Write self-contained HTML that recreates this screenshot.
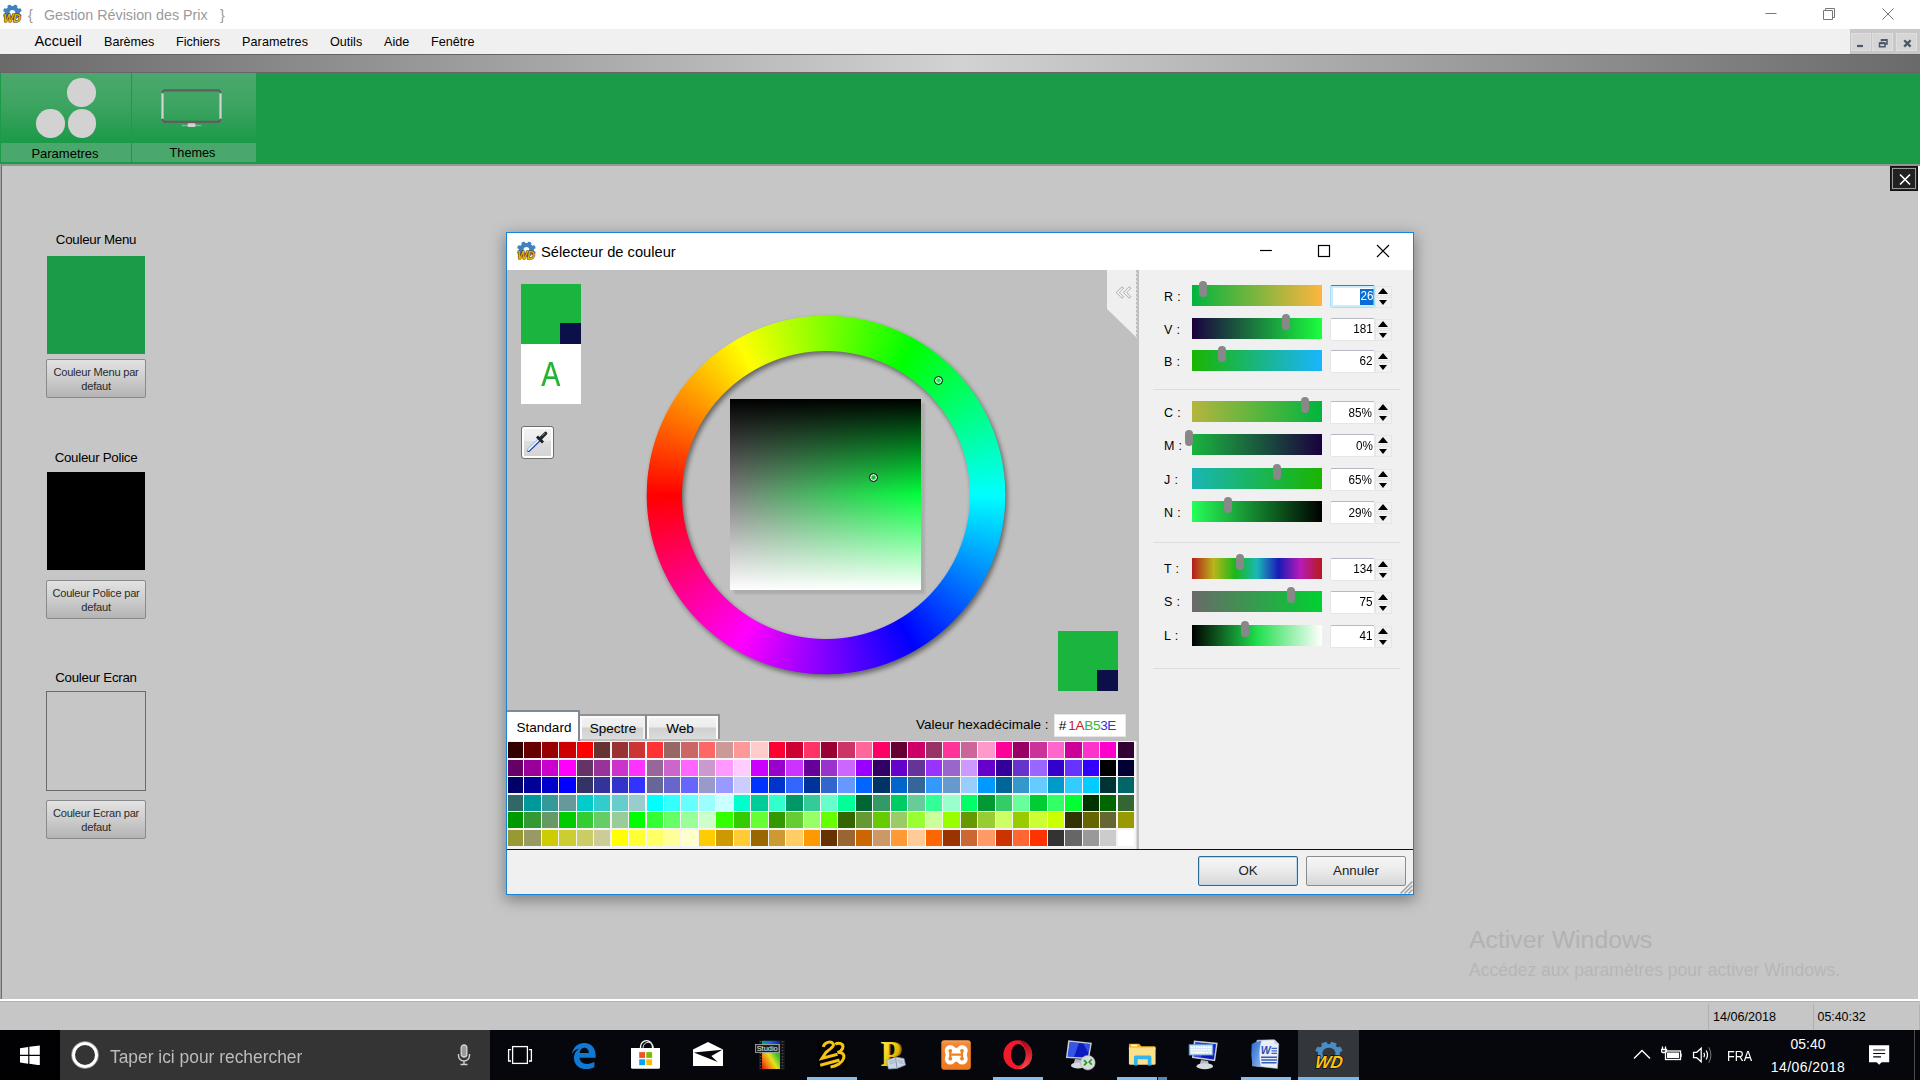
<!DOCTYPE html>
<html lang="fr">
<head>
<meta charset="utf-8">
<title>Gestion Révision des Prix</title>
<style>
*{box-sizing:border-box;margin:0;padding:0}
html,body{width:1920px;height:1080px;overflow:hidden;background:#c6c6c6;font-family:"Liberation Sans",sans-serif;color:#000}
.abs,#root *{position:absolute}
#root{position:relative;width:1920px;height:1080px;overflow:hidden}
#root span.t{white-space:nowrap;line-height:1}
/* title bar */
#titlebar{left:0;top:0;width:1920px;height:29px;background:#fff}
#menubar{left:0;top:29px;width:1920px;height:25px;background:#f0f0f0}
#graybar{left:0;top:54px;width:1920px;height:19px;border-top:1px solid #646464;border-bottom:1px solid #6a646a;background:linear-gradient(to right,#6a6a6a 0%,#d2d2d2 50%,#6a6a6a 100%)}
#ribbon{left:0;top:73px;width:1920px;height:91px;background:#1b9a48}
.rbtn{top:0;height:89px;background:linear-gradient(to bottom,#4aa86c 0%,#3ea462 35%,#1b9a48 78%,#1b9a48 100%)}
.rlbl{left:0;bottom:0;height:19px;width:100%;background:#4aa86c}
#mdi{left:0;top:164px;width:1920px;height:837px;background:#c6c6c6}
#status{left:0;top:1001px;width:1920px;height:29px;background:#c6c6c6;border-top:1px solid #b2b2b2}
#taskbar{left:0;top:1030px;width:1920px;height:50px;background:#05070d}
.m{font-size:12.600px;top:7px}
.lbl{font-size:13.300px;letter-spacing:-.270px;width:200px;text-align:center}
.dbtn{width:100px;height:39px;border:1px solid #8a8a8a;border-radius:2px;background:linear-gradient(to bottom,#e2e2e2 0%,#cfcfcf 45%,#b4b4b4 100%);font-size:11.100px;letter-spacing:-.230px;text-align:center;line-height:14px;padding:5px 4px 0 4px;color:#2a2a2a}

/* dialog */
#dlg{left:0;top:0;width:0;height:0}
#dlg i{display:block}
.sl{left:1192px;width:130px;height:21px}
.hd{width:8px;height:16px;border-radius:4px;background:#888}
.lb{left:1164px;font-size:12.500px;white-space:pre;line-height:1;word-spacing:.7px}
.inp{left:1330px;width:44.500px;height:22.500px;background:#fff;border:1px solid #e6e6ea;border-top-color:#b8b8c4;border-radius:2px}
.inp span{right:1px;top:2.500px;font-size:13px;line-height:1;white-space:nowrap;transform:scaleX(.9);transform-origin:100% 50%}
.sp{left:1375.400px;width:17px;height:22px}
.sp:before,.sp:after{content:"";position:absolute;box-sizing:border-box;left:0;width:17px;height:10.300px;border:1px solid #e6e6e6;background:#f1f1f1}
.sp:before{top:.6px}.sp:after{top:12.400px}
.sp b{width:0;height:0;z-index:2}
.sp b.u{left:2.300px;top:2.800px;border-left:5.800px solid transparent;border-right:5.800px solid transparent;border-bottom:6px solid #000}
.sp b.d{left:3.300px;top:14.800px;border-left:4.800px solid transparent;border-right:4.800px solid transparent;border-top:5.300px solid #000}
.sep{left:1153px;width:247px;height:1px;background:#dcdcdc}
.tab{font-size:13.500px;text-align:center;line-height:1}
.btn{width:100px;height:30px;border:1px solid #8c8c8c;border-radius:2px;background:linear-gradient(to bottom,#f6f6f6 0%,#ececec 45%,#d6d6d6 100%);font-size:13.300px;text-align:center;line-height:28px;color:#222}
</style>
</head>
<body>
<div id="root">

<!-- ===== main window chrome ===== -->
<div id="titlebar">
  <svg style="left:0;top:0" width="24" height="24" viewBox="0 0 24 24"><g fill="#3f82c0" transform="translate(12.400 13) scale(1.100 1) translate(-12.400 -13)"><rect x="10.600" y="4.300" width="3.600" height="5" rx="1.300" transform="rotate(-67.5 12.400 13)"/><rect x="10.600" y="4.300" width="3.600" height="5" rx="1.300" transform="rotate(-22.5 12.400 13)"/><rect x="10.600" y="4.300" width="3.600" height="5" rx="1.300" transform="rotate(22.5 12.400 13)"/><rect x="10.600" y="4.300" width="3.600" height="5" rx="1.300" transform="rotate(67.5 12.400 13)"/><rect x="10.600" y="4.300" width="3.600" height="5" rx="1.300" transform="rotate(-112.5 12.400 13)"/><rect x="10.600" y="4.300" width="3.600" height="5" rx="1.300" transform="rotate(112.5 12.400 13)"/><circle cx="12.400" cy="13" r="6.900"/></g><circle cx="12.400" cy="13" r="2.900" fill="#fff"/><text x="12.200" y="22" font-family="Liberation Sans,sans-serif" font-weight="bold" font-style="italic" font-size="11.500" text-anchor="middle" fill="#ecb400" stroke="#4a3200" stroke-width="1.100" paint-order="stroke" textLength="17.500" lengthAdjust="spacingAndGlyphs">WD</text></svg>
  <span class="t" style="left:28px;top:8px;font-size:14.300px;color:#9a9a9a">{</span><span class="t" style="left:44px;top:8px;font-size:14.300px;color:#9a9a9a">Gestion Révision des Prix</span><span class="t" style="left:220px;top:8px;font-size:14.300px;color:#9a9a9a">}</span>
  <!-- window buttons -->
  <svg style="left:1760px;top:0" width="160" height="29" viewBox="0 0 160 29" fill="none" stroke="#777" stroke-width="1">
    <path d="M5.500 13.500H16.500"/>
    <path d="M63.500 10.500h9v9h-9z M65.500 10.500v-2h9v9h-2"/>
    <path d="M122.500 8.500l11 11M133.500 8.500l-11 11"/>
  </svg>
</div>

<div id="menubar">
  <span class="t" style="left:34.500px;top:5px;font-size:14.700px">Accueil</span>
  <span class="t m" style="left:104px">Barèmes</span>
  <span class="t m" style="left:176px">Fichiers</span>
  <span class="t m" style="left:242px;letter-spacing:.1px">Parametres</span>
  <span class="t m" style="left:330px">Outils</span>
  <span class="t m" style="left:384px">Aide</span>
  <span class="t m" style="left:431px">Fenêtre</span>
  <div style="left:1850px;top:0;width:70px;height:25px;background:#c8c8c8">
    <div style="left:.5px;top:4.300px;width:20px;height:18.200px;background:#d6d6d6;border:1px solid #dedede"></div>
    <div style="left:22.300px;top:4.300px;width:20.300px;height:18.200px;background:#d6d6d6;border:1px solid #dedede"></div>
    <div style="left:46px;top:4.300px;width:20.700px;height:18.200px;background:#d6d6d6;border:1px solid #dedede"></div>
    <svg style="left:0;top:0" width="70" height="25" viewBox="0 0 70 25" fill="none" stroke="#4a566a">
      <path d="M7 17h6" stroke-width="2.200"/>
      <path d="M29.500 14h5.500v3.700h-5.500z M31.500 12.500v-1.800h5.500v4.300h-1.800" stroke-width="1.500"/><path d="M29.500 14.200h5.500M31.500 11h5.500" stroke-width="2"/>
      <path d="M54.200 11.200l6.400 6.400M60.600 11.200l-6.400 6.400" stroke-width="2.300"/>
    </svg>
  </div>
</div>

<div id="graybar"></div>

<div id="ribbon">
  <div class="rbtn" style="left:1px;width:130px">
    <div style="left:66.200px;top:5px;width:28.700px;height:28.700px;border-radius:50%;background:#d2d2d2"></div>
    <div style="left:35.200px;top:36.200px;width:28.700px;height:28.700px;border-radius:50%;background:#d2d2d2"></div>
    <div style="left:66.500px;top:36.200px;width:28.700px;height:28.700px;border-radius:50%;background:#d2d2d2"></div>
    <div class="rlbl"><span class="t" style="left:-1px;width:100%;text-align:center;top:4px;font-size:13px">Parametres</span></div>
  </div>
  <div class="rbtn" style="left:132px;width:124px">
    <svg style="left:25.500px;top:13px" width="68" height="46" viewBox="0 0 68 46" fill="none">
      <path d="M4.500 6.500V33.500M62.500 6.500V33.500" stroke="#d2d2d2" stroke-width="2.200"/>
      <path d="M3.800 7L6.300 4.300H60.700L63.200 7" stroke="#5e5e5e" stroke-width="2.200" stroke-linejoin="round"/>
      <path d="M3.800 33L6.300 35.800H60.700L63.200 33" stroke="#5e5e5e" stroke-width="2.200" stroke-linejoin="round"/>
      <path d="M23.800 39.500H43.300" stroke="#9aa89e" stroke-width="1.400"/>
      <rect x="29.700" y="37.300" width="7.700" height="3.700" rx="1" fill="#d2d2d2"/>
    </svg>
    <div class="rlbl"><span class="t" style="left:-1.500px;width:100%;text-align:center;top:4px;font-size:12.700px">Themes</span></div>
  </div>
</div>

<div id="mdi">
  <div style="left:0;top:0;width:1920px;height:2px;background:#8f9a92"></div>
  <div style="left:0;top:1px;width:1px;height:834px;background:#a4a4a4"></div><div style="left:1px;top:1px;width:1px;height:834px;background:#6c6c6c"></div>
  <!-- close X -->
  <div style="left:1890px;top:2px;width:28px;height:25px;background:#222;border:1px solid #111;outline:1px solid #9a9a9a;outline-offset:-3px">
    <svg style="left:6.500px;top:5.500px" width="14" height="13" viewBox="0 0 14 13" stroke="#fff" stroke-width="1.700" fill="none"><path d="M2 1.500l10 10M12 1.500l-10 10"/></svg>
  </div>

  <span class="t lbl" style="left:-4px;top:69px">Couleur Menu</span>
  <div style="left:47px;top:92px;width:98px;height:98px;background:#1b9a48"></div>
  <div class="dbtn" style="left:46px;top:195px">Couleur Menu par defaut</div>

  <span class="t lbl" style="left:-4px;top:287px">Couleur Police</span>
  <div style="left:47px;top:308px;width:98px;height:98px;background:#000"></div>
  <div class="dbtn" style="left:46px;top:416px">Couleur Police par defaut</div>

  <span class="t lbl" style="left:-4px;top:507px">Couleur Ecran</span>
  <div style="left:46px;top:527px;width:100px;height:100px;background:#c6c6c6;border:1px solid #6a6a6a"></div>
  <div class="dbtn" style="left:46px;top:636px">Couleur Ecran par defaut</div>

  <span class="t" style="left:1469px;top:764.300px;font-size:24.800px;color:#b2b2b2">Activer Windows</span>
  <span class="t" style="left:1469px;top:798px;font-size:17.550px;color:#b6b6b6">Accédez aux paramètres pour activer Windows.</span>
  <div style="left:1918px;top:2px;width:2px;height:835px;background:#fff"></div>
  <div style="left:0;top:835px;width:1920px;height:2px;background:#fff"></div>
</div>

<div id="status">
  <div style="left:1708px;top:2px;width:1px;height:26px;background:#b0b0b0"></div><div style="left:1919px;top:2px;width:1px;height:26px;background:#b4b4b4"></div>
  <div style="left:1813px;top:2px;width:1px;height:26px;background:#b0b0b0"></div>
  <span class="t" style="left:1713px;top:8.500px;font-size:12.600px">14/06/2018</span>
  <span class="t" style="left:1817.500px;top:8.500px;font-size:12.400px">05:40:32</span>
</div>

<!-- DIALOG -->

<div id="dlg">
 <div style="left:498px;top:226px;width:924px;height:680px;background:rgba(0,0,0,0);box-shadow:0 0 0 0 transparent"></div>
 <div style="left:506px;top:232px;width:908px;height:663px;background:#f0f0f0;border:1px solid #1883d7;box-shadow:0 4px 14px 1px rgba(0,0,0,.36)"></div>
 <div style="left:507px;top:233px;width:906px;height:37px;background:#fff"></div>
 <svg style="left:514px;top:237px" width="24" height="24" viewBox="0 0 24 24"><g fill="#3f82c0" transform="translate(12.400 13) scale(1.100 1) translate(-12.400 -13)"><rect x="10.600" y="4.300" width="3.600" height="5" rx="1.300" transform="rotate(-67.5 12.400 13)"/><rect x="10.600" y="4.300" width="3.600" height="5" rx="1.300" transform="rotate(-22.5 12.400 13)"/><rect x="10.600" y="4.300" width="3.600" height="5" rx="1.300" transform="rotate(22.5 12.400 13)"/><rect x="10.600" y="4.300" width="3.600" height="5" rx="1.300" transform="rotate(67.5 12.400 13)"/><rect x="10.600" y="4.300" width="3.600" height="5" rx="1.300" transform="rotate(-112.5 12.400 13)"/><rect x="10.600" y="4.300" width="3.600" height="5" rx="1.300" transform="rotate(112.5 12.400 13)"/><circle cx="12.400" cy="13" r="6.900"/></g><circle cx="12.400" cy="13" r="2.900" fill="#fff"/><text x="12.200" y="22" font-family="Liberation Sans,sans-serif" font-weight="bold" font-style="italic" font-size="11.500" text-anchor="middle" fill="#ecb400" stroke="#4a3200" stroke-width="1.100" paint-order="stroke" textLength="17.500" lengthAdjust="spacingAndGlyphs">WD</text></svg>
 <span class="t" style="left:541px;top:244.700px;font-size:14.700px">Sélecteur de couleur</span>
 <svg style="left:1250px;top:240px" width="150" height="24" viewBox="0 0 150 24" fill="none" stroke="#000" stroke-width="1.2">
   <path d="M10 10.5H22"/>
   <rect x="68.5" y="5.500" width="11" height="11"/>
   <path d="M127 5l12 12M139 5l-12 12"/>
 </svg>

 <!-- left gray panel -->
 <div style="left:507px;top:270px;width:632px;height:579px;background:#c0c0c0"></div>
 <!-- collapse tab -->
 <svg style="left:1106px;top:270px" width="32" height="70" viewBox="0 0 32 70">
   <path d="M1 0H31V68L1 39Z" fill="#efefef"/>
   <path d="M30.500 0V67" stroke="#bcbcbc" stroke-dasharray="2.500 1.500" fill="none"/>
   <path d="M16 18.300l-4.200 4.200 4.200 4.200M23.300 18.300l-4.200 4.200 4.200 4.200" stroke="#b2b2b2" stroke-width="3" fill="none" stroke-linecap="square"/>
   <path d="M16 18.300l-4.200 4.200 4.200 4.200M23.300 18.300l-4.200 4.200 4.200 4.200" stroke="#fbfbfb" stroke-width="1.300" fill="none" stroke-linecap="square"/>
 </svg>

 <!-- swatch + A -->
 <div style="left:521px;top:284px;width:60px;height:60px;background:#1ab53e"></div>
 <div style="left:560px;top:323px;width:21px;height:21px;background:#0b1048"></div>
 <div style="left:521px;top:344px;width:60px;height:60px;background:#fff"></div>
 <span class="t" style="left:521px;width:60px;text-align:center;top:357px;font-size:35.500px;transform:scaleX(.8);color:#1ab53e;text-shadow:-0.700px 0 0 #d8c83a">A</span>
 <!-- eyedropper -->
 <div style="left:521.250px;top:426.250px;width:32.500px;height:32.500px;border:1px solid #707070;border-radius:3px;box-shadow:inset 0 0 0 2px #fdfdfd;background:linear-gradient(to bottom,#f2f2f2 0%,#ebebeb 46%,#dddddd 46%,#d3d3d3 100%)"></div>
 <svg style="left:525px;top:430px" width="25" height="25" viewBox="0 0 25 25" fill="none">
   <path d="M14 10.300L3.600 20.300" stroke="#2636b4" stroke-width="3.400" stroke-linecap="round"/>
   <path d="M13.400 10L3.200 19.900" stroke="#bfe4f6" stroke-width="2.200" stroke-linecap="round"/>
   <path d="M13.300 10.300L3.800 19.600" stroke="#ffffff" stroke-width="1" stroke-linecap="round"/>
   <path d="M12 6.400L18 12.400" stroke="#1c1c1c" stroke-width="2.800"/>
   <path d="M14.200 9.800L15.800 8.200" stroke="#1c2a3a" stroke-width="4.200"/>
   <path d="M16 8L20.600 3.400" stroke="#262626" stroke-width="3.400" stroke-linecap="round"/>
   <path d="M17 6L20 3" stroke="#8a8a8a" stroke-width=".8"/>
 </svg>

 <!-- wheel -->
 <div style="left:646px;top:315px;width:360px;height:360px;filter:drop-shadow(2.500px 3px 2.500px rgba(0,0,0,.48))">
   <div style="left:0;top:0;width:360px;height:360px;border-radius:50%;background:conic-gradient(from 270deg,#f00,#ff0,#0f0,#0ff,#00f,#f0f,#f00);-webkit-mask:radial-gradient(circle closest-side,transparent 143.500px,#000 144.500px,#000 178.800px,transparent 179.800px);mask:radial-gradient(circle closest-side,transparent 143.500px,#000 144.500px,#000 178.800px,transparent 179.800px)"></div>
 </div>
 <div style="left:730px;top:399px;width:191px;height:191px;box-shadow:4px 4px 2px rgba(0,0,0,.1);background:linear-gradient(to bottom,#000 0%,rgba(0,0,0,0) 50%,rgba(255,255,255,0) 50%,#fff 100%),linear-gradient(to right,#808080,#00ff3b)"></div>
 <div style="left:934px;top:376px;width:9px;height:9px;border-radius:50%;border:1px solid #111;box-shadow:inset 0 0 0 1.200px #f4fff4"></div>
 <div style="left:869px;top:473px;width:9px;height:9px;border-radius:50%;border:1px solid #111;box-shadow:inset 0 0 0 1.200px #f4fff4"></div>

 <!-- bottom right swatch -->
 <div style="left:1058px;top:631px;width:60px;height:60px;background:#1ab53e"></div>
 <div style="left:1097px;top:670px;width:21px;height:21px;background:#0b1048"></div>

 <!-- tabs -->
 <div style="left:580px;top:713.500px;width:140px;height:25.500px;border-top:2px solid #909090;border-right:2px solid #909090;background:linear-gradient(to bottom,#f4f4f4 0%,#ececec 48%,#d0d0d0 52%,#dcdcdc 100%);box-shadow:inset -2px 2px 0 #fbfbfb"></div>
 <div style="left:645px;top:715px;width:2px;height:24px;background:#8a8a8a"></div>
 <div style="left:647px;top:715.500px;width:2px;height:23.500px;background:#fbfbfb"></div>
 <div style="left:580px;top:715.500px;width:2px;height:23.500px;background:#fbfbfb"></div>
 <div style="left:643px;top:715.500px;width:2px;height:23.500px;background:#f2f2f2"></div>
 <div style="left:507px;top:710px;width:72.500px;height:32px;background:#fff;border-top:2px solid #80889a;border-right:2px solid #80889a"></div>
 <span class="t tab" style="left:508px;width:72px;top:721px">Standard</span>
 <span class="t tab" style="left:580px;width:66px;top:722px">Spectre</span>
 <span class="t tab" style="left:644px;width:72px;top:722px">Web</span>

 <span class="t" style="left:916px;top:718px;font-size:13.500px">Valeur hexadécimale :</span>
 <div style="left:1054px;top:714px;width:72px;height:23px;background:#fff;border:1px solid #e6e6e6"></div>
 <span class="t" style="left:1058.800px;top:718.600px;font-size:13.500px;letter-spacing:-.3px">#<span style="position:static;color:#c8202a;margin-left:2.300px">1A</span><span style="position:static;color:#2eb82e">B5</span><span style="position:static;color:#3030e0">3E</span></span>

 <!-- palette -->
 <div style="left:507px;top:741px;width:630px;height:108px;background:#f4f4f4"></div>
 <div style="left:1136px;top:741px;width:1px;height:108px;background:#dadada"></div>
<i style="left:508px;top:742px;width:15px;height:16px;background:#330000"></i>
<i style="left:524px;top:742px;width:17px;height:16px;background:#660000"></i>
<i style="left:542px;top:742px;width:16px;height:16px;background:#990000"></i>
<i style="left:559px;top:742px;width:17px;height:16px;background:#CC0000"></i>
<i style="left:577px;top:742px;width:16px;height:16px;background:#FF0000"></i>
<i style="left:594px;top:742px;width:16px;height:16px;background:#663333"></i>
<i style="left:612px;top:742px;width:16px;height:16px;background:#993333"></i>
<i style="left:629px;top:742px;width:16px;height:16px;background:#CC3333"></i>
<i style="left:647px;top:742px;width:16px;height:16px;background:#FF3333"></i>
<i style="left:664px;top:742px;width:16px;height:16px;background:#996666"></i>
<i style="left:681px;top:742px;width:17px;height:16px;background:#CC6666"></i>
<i style="left:699px;top:742px;width:16px;height:16px;background:#FF6666"></i>
<i style="left:716px;top:742px;width:17px;height:16px;background:#CC9999"></i>
<i style="left:734px;top:742px;width:16px;height:16px;background:#FF9999"></i>
<i style="left:751px;top:742px;width:17px;height:16px;background:#FFCCCC"></i>
<i style="left:769px;top:742px;width:16px;height:16px;background:#FF0033"></i>
<i style="left:786px;top:742px;width:17px;height:16px;background:#CC0033"></i>
<i style="left:804px;top:742px;width:16px;height:16px;background:#FF3366"></i>
<i style="left:821px;top:742px;width:16px;height:16px;background:#990033"></i>
<i style="left:838px;top:742px;width:17px;height:16px;background:#CC3366"></i>
<i style="left:856px;top:742px;width:16px;height:16px;background:#FF6699"></i>
<i style="left:873px;top:742px;width:17px;height:16px;background:#FF0066"></i>
<i style="left:891px;top:742px;width:16px;height:16px;background:#660033"></i>
<i style="left:908px;top:742px;width:17px;height:16px;background:#CC0066"></i>
<i style="left:926px;top:742px;width:16px;height:16px;background:#993366"></i>
<i style="left:943px;top:742px;width:17px;height:16px;background:#FF3399"></i>
<i style="left:961px;top:742px;width:16px;height:16px;background:#CC6699"></i>
<i style="left:978px;top:742px;width:17px;height:16px;background:#FF99CC"></i>
<i style="left:996px;top:742px;width:16px;height:16px;background:#FF0099"></i>
<i style="left:1013px;top:742px;width:16px;height:16px;background:#990066"></i>
<i style="left:1030px;top:742px;width:17px;height:16px;background:#CC3399"></i>
<i style="left:1048px;top:742px;width:16px;height:16px;background:#FF66CC"></i>
<i style="left:1065px;top:742px;width:17px;height:16px;background:#CC0099"></i>
<i style="left:1083px;top:742px;width:16px;height:16px;background:#FF33CC"></i>
<i style="left:1100px;top:742px;width:16px;height:16px;background:#FF00CC"></i>
<i style="left:1118px;top:742px;width:16px;height:16px;background:#330033"></i>
<i style="left:508px;top:760px;width:15px;height:16px;background:#660066"></i>
<i style="left:524px;top:760px;width:17px;height:16px;background:#990099"></i>
<i style="left:542px;top:760px;width:16px;height:16px;background:#CC00CC"></i>
<i style="left:559px;top:760px;width:17px;height:16px;background:#FF00FF"></i>
<i style="left:577px;top:760px;width:16px;height:16px;background:#663366"></i>
<i style="left:594px;top:760px;width:16px;height:16px;background:#993399"></i>
<i style="left:612px;top:760px;width:16px;height:16px;background:#CC33CC"></i>
<i style="left:629px;top:760px;width:16px;height:16px;background:#FF33FF"></i>
<i style="left:647px;top:760px;width:16px;height:16px;background:#996699"></i>
<i style="left:664px;top:760px;width:16px;height:16px;background:#CC66CC"></i>
<i style="left:681px;top:760px;width:17px;height:16px;background:#FF66FF"></i>
<i style="left:699px;top:760px;width:16px;height:16px;background:#CC99CC"></i>
<i style="left:716px;top:760px;width:17px;height:16px;background:#FF99FF"></i>
<i style="left:734px;top:760px;width:16px;height:16px;background:#FFCCFF"></i>
<i style="left:751px;top:760px;width:17px;height:16px;background:#CC00FF"></i>
<i style="left:769px;top:760px;width:16px;height:16px;background:#9900CC"></i>
<i style="left:786px;top:760px;width:17px;height:16px;background:#CC33FF"></i>
<i style="left:804px;top:760px;width:16px;height:16px;background:#660099"></i>
<i style="left:821px;top:760px;width:16px;height:16px;background:#9933CC"></i>
<i style="left:838px;top:760px;width:17px;height:16px;background:#CC66FF"></i>
<i style="left:856px;top:760px;width:16px;height:16px;background:#9900FF"></i>
<i style="left:873px;top:760px;width:17px;height:16px;background:#330066"></i>
<i style="left:891px;top:760px;width:16px;height:16px;background:#6600CC"></i>
<i style="left:908px;top:760px;width:17px;height:16px;background:#663399"></i>
<i style="left:926px;top:760px;width:16px;height:16px;background:#9933FF"></i>
<i style="left:943px;top:760px;width:17px;height:16px;background:#9966CC"></i>
<i style="left:961px;top:760px;width:16px;height:16px;background:#CC99FF"></i>
<i style="left:978px;top:760px;width:17px;height:16px;background:#6600CC"></i>
<i style="left:996px;top:760px;width:16px;height:16px;background:#330099"></i>
<i style="left:1013px;top:760px;width:16px;height:16px;background:#6633CC"></i>
<i style="left:1030px;top:760px;width:17px;height:16px;background:#9966FF"></i>
<i style="left:1048px;top:760px;width:16px;height:16px;background:#3300CC"></i>
<i style="left:1065px;top:760px;width:17px;height:16px;background:#6633FF"></i>
<i style="left:1083px;top:760px;width:16px;height:16px;background:#3300FF"></i>
<i style="left:1100px;top:760px;width:16px;height:16px;background:#000000"></i>
<i style="left:1118px;top:760px;width:16px;height:16px;background:#000033"></i>
<i style="left:508px;top:777px;width:15px;height:16px;background:#000066"></i>
<i style="left:524px;top:777px;width:17px;height:16px;background:#000099"></i>
<i style="left:542px;top:777px;width:16px;height:16px;background:#0000CC"></i>
<i style="left:559px;top:777px;width:17px;height:16px;background:#0000FF"></i>
<i style="left:577px;top:777px;width:16px;height:16px;background:#333366"></i>
<i style="left:594px;top:777px;width:16px;height:16px;background:#333399"></i>
<i style="left:612px;top:777px;width:16px;height:16px;background:#3333CC"></i>
<i style="left:629px;top:777px;width:16px;height:16px;background:#3333FF"></i>
<i style="left:647px;top:777px;width:16px;height:16px;background:#666699"></i>
<i style="left:664px;top:777px;width:16px;height:16px;background:#6666CC"></i>
<i style="left:681px;top:777px;width:17px;height:16px;background:#6666FF"></i>
<i style="left:699px;top:777px;width:16px;height:16px;background:#9999CC"></i>
<i style="left:716px;top:777px;width:17px;height:16px;background:#9999FF"></i>
<i style="left:734px;top:777px;width:16px;height:16px;background:#CCCCFF"></i>
<i style="left:751px;top:777px;width:17px;height:16px;background:#0033FF"></i>
<i style="left:769px;top:777px;width:16px;height:16px;background:#0033CC"></i>
<i style="left:786px;top:777px;width:17px;height:16px;background:#3366FF"></i>
<i style="left:804px;top:777px;width:16px;height:16px;background:#003399"></i>
<i style="left:821px;top:777px;width:16px;height:16px;background:#3366CC"></i>
<i style="left:838px;top:777px;width:17px;height:16px;background:#6699FF"></i>
<i style="left:856px;top:777px;width:16px;height:16px;background:#0066FF"></i>
<i style="left:873px;top:777px;width:17px;height:16px;background:#003366"></i>
<i style="left:891px;top:777px;width:16px;height:16px;background:#0066CC"></i>
<i style="left:908px;top:777px;width:17px;height:16px;background:#336699"></i>
<i style="left:926px;top:777px;width:16px;height:16px;background:#3399FF"></i>
<i style="left:943px;top:777px;width:17px;height:16px;background:#6699CC"></i>
<i style="left:961px;top:777px;width:16px;height:16px;background:#99CCFF"></i>
<i style="left:978px;top:777px;width:17px;height:16px;background:#0099FF"></i>
<i style="left:996px;top:777px;width:16px;height:16px;background:#006699"></i>
<i style="left:1013px;top:777px;width:16px;height:16px;background:#3399CC"></i>
<i style="left:1030px;top:777px;width:17px;height:16px;background:#66CCFF"></i>
<i style="left:1048px;top:777px;width:16px;height:16px;background:#0099CC"></i>
<i style="left:1065px;top:777px;width:17px;height:16px;background:#33CCFF"></i>
<i style="left:1083px;top:777px;width:16px;height:16px;background:#00CCFF"></i>
<i style="left:1100px;top:777px;width:16px;height:16px;background:#003333"></i>
<i style="left:1118px;top:777px;width:16px;height:16px;background:#006666"></i>
<i style="left:508px;top:795px;width:15px;height:16px;background:#336666"></i>
<i style="left:524px;top:795px;width:17px;height:16px;background:#009999"></i>
<i style="left:542px;top:795px;width:16px;height:16px;background:#339999"></i>
<i style="left:559px;top:795px;width:17px;height:16px;background:#669999"></i>
<i style="left:577px;top:795px;width:16px;height:16px;background:#00CCCC"></i>
<i style="left:594px;top:795px;width:16px;height:16px;background:#33CCCC"></i>
<i style="left:612px;top:795px;width:16px;height:16px;background:#66CCCC"></i>
<i style="left:629px;top:795px;width:16px;height:16px;background:#99CCCC"></i>
<i style="left:647px;top:795px;width:16px;height:16px;background:#00FFFF"></i>
<i style="left:664px;top:795px;width:16px;height:16px;background:#33FFFF"></i>
<i style="left:681px;top:795px;width:17px;height:16px;background:#66FFFF"></i>
<i style="left:699px;top:795px;width:16px;height:16px;background:#99FFFF"></i>
<i style="left:716px;top:795px;width:17px;height:16px;background:#CCFFFF"></i>
<i style="left:734px;top:795px;width:16px;height:16px;background:#00FFCC"></i>
<i style="left:751px;top:795px;width:17px;height:16px;background:#00CC99"></i>
<i style="left:769px;top:795px;width:16px;height:16px;background:#33FFCC"></i>
<i style="left:786px;top:795px;width:17px;height:16px;background:#009966"></i>
<i style="left:804px;top:795px;width:16px;height:16px;background:#33CC99"></i>
<i style="left:821px;top:795px;width:16px;height:16px;background:#66FFCC"></i>
<i style="left:838px;top:795px;width:17px;height:16px;background:#00FF99"></i>
<i style="left:856px;top:795px;width:16px;height:16px;background:#006633"></i>
<i style="left:873px;top:795px;width:17px;height:16px;background:#339966"></i>
<i style="left:891px;top:795px;width:16px;height:16px;background:#00CC66"></i>
<i style="left:908px;top:795px;width:17px;height:16px;background:#66CC99"></i>
<i style="left:926px;top:795px;width:16px;height:16px;background:#33FF99"></i>
<i style="left:943px;top:795px;width:17px;height:16px;background:#99FFCC"></i>
<i style="left:961px;top:795px;width:16px;height:16px;background:#00FF66"></i>
<i style="left:978px;top:795px;width:17px;height:16px;background:#009933"></i>
<i style="left:996px;top:795px;width:16px;height:16px;background:#33CC66"></i>
<i style="left:1013px;top:795px;width:16px;height:16px;background:#66FF99"></i>
<i style="left:1030px;top:795px;width:17px;height:16px;background:#00CC33"></i>
<i style="left:1048px;top:795px;width:16px;height:16px;background:#33FF66"></i>
<i style="left:1065px;top:795px;width:17px;height:16px;background:#00FF33"></i>
<i style="left:1083px;top:795px;width:16px;height:16px;background:#003300"></i>
<i style="left:1100px;top:795px;width:16px;height:16px;background:#006600"></i>
<i style="left:1118px;top:795px;width:16px;height:16px;background:#336633"></i>
<i style="left:508px;top:812px;width:15px;height:16px;background:#009900"></i>
<i style="left:524px;top:812px;width:17px;height:16px;background:#339933"></i>
<i style="left:542px;top:812px;width:16px;height:16px;background:#669966"></i>
<i style="left:559px;top:812px;width:17px;height:16px;background:#00CC00"></i>
<i style="left:577px;top:812px;width:16px;height:16px;background:#33CC33"></i>
<i style="left:594px;top:812px;width:16px;height:16px;background:#66CC66"></i>
<i style="left:612px;top:812px;width:16px;height:16px;background:#99CC99"></i>
<i style="left:629px;top:812px;width:16px;height:16px;background:#00FF00"></i>
<i style="left:647px;top:812px;width:16px;height:16px;background:#33FF33"></i>
<i style="left:664px;top:812px;width:16px;height:16px;background:#66FF66"></i>
<i style="left:681px;top:812px;width:17px;height:16px;background:#99FF99"></i>
<i style="left:699px;top:812px;width:16px;height:16px;background:#CCFFCC"></i>
<i style="left:716px;top:812px;width:17px;height:16px;background:#33FF00"></i>
<i style="left:734px;top:812px;width:16px;height:16px;background:#33CC00"></i>
<i style="left:751px;top:812px;width:17px;height:16px;background:#66FF33"></i>
<i style="left:769px;top:812px;width:16px;height:16px;background:#339900"></i>
<i style="left:786px;top:812px;width:17px;height:16px;background:#66CC33"></i>
<i style="left:804px;top:812px;width:16px;height:16px;background:#99FF66"></i>
<i style="left:821px;top:812px;width:16px;height:16px;background:#66FF00"></i>
<i style="left:838px;top:812px;width:17px;height:16px;background:#336600"></i>
<i style="left:856px;top:812px;width:16px;height:16px;background:#669933"></i>
<i style="left:873px;top:812px;width:17px;height:16px;background:#66CC00"></i>
<i style="left:891px;top:812px;width:16px;height:16px;background:#99CC66"></i>
<i style="left:908px;top:812px;width:17px;height:16px;background:#99FF33"></i>
<i style="left:926px;top:812px;width:16px;height:16px;background:#CCFF99"></i>
<i style="left:943px;top:812px;width:17px;height:16px;background:#99FF00"></i>
<i style="left:961px;top:812px;width:16px;height:16px;background:#669900"></i>
<i style="left:978px;top:812px;width:17px;height:16px;background:#99CC33"></i>
<i style="left:996px;top:812px;width:16px;height:16px;background:#CCFF66"></i>
<i style="left:1013px;top:812px;width:16px;height:16px;background:#99CC00"></i>
<i style="left:1030px;top:812px;width:17px;height:16px;background:#CCFF33"></i>
<i style="left:1048px;top:812px;width:16px;height:16px;background:#CCFF00"></i>
<i style="left:1065px;top:812px;width:17px;height:16px;background:#333300"></i>
<i style="left:1083px;top:812px;width:16px;height:16px;background:#666600"></i>
<i style="left:1100px;top:812px;width:16px;height:16px;background:#666633"></i>
<i style="left:1118px;top:812px;width:16px;height:16px;background:#999900"></i>
<i style="left:508px;top:830px;width:15px;height:16px;background:#999933"></i>
<i style="left:524px;top:830px;width:17px;height:16px;background:#999966"></i>
<i style="left:542px;top:830px;width:16px;height:16px;background:#CCCC00"></i>
<i style="left:559px;top:830px;width:17px;height:16px;background:#CCCC33"></i>
<i style="left:577px;top:830px;width:16px;height:16px;background:#CCCC66"></i>
<i style="left:594px;top:830px;width:16px;height:16px;background:#CCCC99"></i>
<i style="left:612px;top:830px;width:16px;height:16px;background:#FFFF00"></i>
<i style="left:629px;top:830px;width:16px;height:16px;background:#FFFF33"></i>
<i style="left:647px;top:830px;width:16px;height:16px;background:#FFFF66"></i>
<i style="left:664px;top:830px;width:16px;height:16px;background:#FFFF99"></i>
<i style="left:681px;top:830px;width:17px;height:16px;background:#FFFFCC"></i>
<i style="left:699px;top:830px;width:16px;height:16px;background:#FFCC00"></i>
<i style="left:716px;top:830px;width:17px;height:16px;background:#CC9900"></i>
<i style="left:734px;top:830px;width:16px;height:16px;background:#FFCC33"></i>
<i style="left:751px;top:830px;width:17px;height:16px;background:#996600"></i>
<i style="left:769px;top:830px;width:16px;height:16px;background:#CC9933"></i>
<i style="left:786px;top:830px;width:17px;height:16px;background:#FFCC66"></i>
<i style="left:804px;top:830px;width:16px;height:16px;background:#FF9900"></i>
<i style="left:821px;top:830px;width:16px;height:16px;background:#663300"></i>
<i style="left:838px;top:830px;width:17px;height:16px;background:#996633"></i>
<i style="left:856px;top:830px;width:16px;height:16px;background:#CC6600"></i>
<i style="left:873px;top:830px;width:17px;height:16px;background:#CC9966"></i>
<i style="left:891px;top:830px;width:16px;height:16px;background:#FF9933"></i>
<i style="left:908px;top:830px;width:17px;height:16px;background:#FFCC99"></i>
<i style="left:926px;top:830px;width:16px;height:16px;background:#FF6600"></i>
<i style="left:943px;top:830px;width:17px;height:16px;background:#993300"></i>
<i style="left:961px;top:830px;width:16px;height:16px;background:#CC6633"></i>
<i style="left:978px;top:830px;width:17px;height:16px;background:#FF9966"></i>
<i style="left:996px;top:830px;width:16px;height:16px;background:#CC3300"></i>
<i style="left:1013px;top:830px;width:16px;height:16px;background:#FF6633"></i>
<i style="left:1030px;top:830px;width:17px;height:16px;background:#FF3300"></i>
<i style="left:1048px;top:830px;width:16px;height:16px;background:#333333"></i>
<i style="left:1065px;top:830px;width:17px;height:16px;background:#666666"></i>
<i style="left:1083px;top:830px;width:16px;height:16px;background:#999999"></i>
<i style="left:1100px;top:830px;width:16px;height:16px;background:#CCCCCC"></i>
<i style="left:1118px;top:830px;width:16px;height:16px;background:#FFFFFF"></i>
 <div style="left:507px;top:848.500px;width:906px;height:1.500px;background:#111"></div>

 <!-- right panel -->
 <div style="left:1139px;top:270px;width:274px;height:578px;background:#f0f0f0"></div>
<div class="sl" style="top:285px;background:linear-gradient(to right,#00b53e,#ffb53e)"></div><div class="hd" style="left:1199px;top:281px"></div><span class="lb" style="top:291.4px">R :</span><div class="inp" style="top:285px;border:1px solid #a8def6;border-top-color:#3c7fb1;box-shadow:inset 0 0 0 2px #c9eefc"><i style="right:0;top:3px;width:14px;height:16px;background:#0a6cd6"></i><i style="right:0;top:3px;width:1px;height:16px;background:#e08a2a"></i><span style="color:#fff;right:0.500px">26</span></div><div class="sp" style="top:285px"><b class="u"></b><b class="d"></b></div>
<div class="sl" style="top:318px;background:linear-gradient(to right,#1a003e,#1aff3e)"></div><div class="hd" style="left:1282px;top:314px"></div><span class="lb" style="top:324.4px">V :</span><div class="inp" style="top:318px"><span>181</span></div><div class="sp" style="top:318px"><b class="u"></b><b class="d"></b></div>
<div class="sl" style="top:350px;background:linear-gradient(to right,#1ab500,#1ab5ff)"></div><div class="hd" style="left:1218px;top:346px"></div><span class="lb" style="top:356.4px">B :</span><div class="inp" style="top:350px"><span>62</span></div><div class="sp" style="top:350px"><b class="u"></b><b class="d"></b></div>
<div class="sep" style="top:389px"></div>
<div class="sl" style="top:401px;background:linear-gradient(to right,#b5b53e,#00b53e)"></div><div class="hd" style="left:1301px;top:397px"></div><span class="lb" style="top:407.4px">C :</span><div class="inp" style="top:401px"><span style="top:3.500px">85%</span></div><div class="sp" style="top:401px"><b class="u"></b><b class="d"></b></div>
<div class="sl" style="top:434px;background:linear-gradient(to right,#1ab53e,#1a003e)"></div><div class="hd" style="left:1185px;top:430px"></div><span class="lb" style="top:440.4px">M :</span><div class="inp" style="top:434px"><span style="top:3.500px">0%</span></div><div class="sp" style="top:434px"><b class="u"></b><b class="d"></b></div>
<div class="sl" style="top:468px;background:linear-gradient(to right,#1ab5b5,#1ab500)"></div><div class="hd" style="left:1273px;top:464px"></div><span class="lb" style="top:474.4px">J :</span><div class="inp" style="top:468px"><span style="top:3.500px">65%</span></div><div class="sp" style="top:468px"><b class="u"></b><b class="d"></b></div>
<div class="sl" style="top:501px;background:linear-gradient(to right,#26ff59,#000)"></div><div class="hd" style="left:1224px;top:497px"></div><span class="lb" style="top:507.4px">N :</span><div class="inp" style="top:501px"><span style="top:3.500px">29%</span></div><div class="sp" style="top:501px"><b class="u"></b><b class="d"></b></div>
<div class="sep" style="top:542px"></div>
<div class="sl" style="top:558px;background:linear-gradient(to right,hsl(0,75%,41%),hsl(30,75%,41%),hsl(60,75%,41%),hsl(90,75%,41%),hsl(120,75%,41%),hsl(150,75%,41%),hsl(180,75%,41%),hsl(210,75%,41%),hsl(240,75%,41%),hsl(270,75%,41%),hsl(300,75%,41%),hsl(330,75%,41%),hsl(360,75%,41%))"></div><div class="hd" style="left:1236px;top:554px"></div><span class="lb" style="top:562.7px">T :</span><div class="inp" style="top:558px"><span>134</span></div><div class="sp" style="top:558px"><b class="u"></b><b class="d"></b></div>
<div class="sl" style="top:591px;background:linear-gradient(to right,#696969,#00d131)"></div><div class="hd" style="left:1287px;top:587px"></div><span class="lb" style="top:595.7px">S :</span><div class="inp" style="top:591px"><span>75</span></div><div class="sp" style="top:591px"><b class="u"></b><b class="d"></b></div>
<div class="sl" style="top:625px;background:linear-gradient(to right,#000,hsl(134,75%,50%) 50%,#fff)"></div><div class="hd" style="left:1241px;top:621px"></div><span class="lb" style="top:629.7px">L :</span><div class="inp" style="top:625px"><span>41</span></div><div class="sp" style="top:625px"><b class="u"></b><b class="d"></b></div>
<div class="sep" style="top:668px"></div>


 <div class="btn" style="left:1198px;top:856px;border-color:#2c6a94;box-shadow:inset 0 0 0 1px #bcd8ec">OK</div>
 <div class="btn" style="left:1306px;top:856px">Annuler</div>
 <svg style="left:1400px;top:881px" width="13" height="13" viewBox="0 0 13 13" stroke="#a0a0a0" stroke-width="1.500" fill="none"><path d="M12.500 0.500L0.500 12.500M12.500 4.500L4.500 12.500M12.500 8.500L8.500 12.500"/></svg>
</div>


<!-- TASKBAR -->

<div id="taskbar">
  <div style="left:0;top:0;width:60px;height:50px;background:#010104"></div>
  <svg style="left:20px;top:14.700px" width="20.300" height="20.500" viewBox="0 0 21 21" fill="#fff"><path d="M0 3.200L8.500 2V10H0ZM9.700 1.800L20.500 0.300V10H9.700ZM0 11.200H8.500V19.200L0 18ZM9.700 11.200H20.500V20.900L9.700 19.400Z"/></svg>
  <div style="left:60px;top:0;width:430px;height:50px;background:#343434"></div>
  <div style="left:71px;top:11px;width:28.400px;height:28.400px;border-radius:50%;border:1.200px solid #8e8e8e"></div>
  <div style="left:72px;top:12px;width:26.400px;height:26.400px;border-radius:50%;border:3px solid #fff"></div>
  <span class="t" style="left:110px;top:16.500px;font-size:19.200px;transform:scaleX(.906);transform-origin:0 50%;color:#bcbcbc">Taper ici pour rechercher</span>
  <svg style="left:456px;top:14px" width="16" height="22" viewBox="0 0 16 22" fill="none" stroke="#d0d0d0" stroke-width="1.400"><rect x="5.200" y="1" width="5.600" height="12" rx="2.800" fill="#9a9a9a"/><path d="M2.500 10v1.500a5.500 5.500 0 0 0 11 0V10M8 17v3.500M4.500 20.500h7"/></svg>
  <!-- task view -->
  <svg style="left:506px;top:14px" width="28" height="22" viewBox="0 0 28 22" fill="none" stroke="#fff" stroke-width="1.300"><rect x="6.600" y="2.600" width="14.800" height="16.800"/><path d="M5 5.600H2.600V17H5M23 5.600H25.400V17H23"/></svg>
  <!-- edge -->
  <svg style="left:571px;top:11.800px" width="25.500" height="27.300" viewBox="0 0 30 31" preserveAspectRatio="none"><path d="M1 14C2 6 8 1 15.500 1C24 1 29 7 29 15V18H10C10.500 22.500 14 25 18.500 25C22 25 25 24 27.500 22.500V28.500C25 30 21.500 30.800 17.500 30.800C9 30.800 3.500 25.500 3.500 18C3.500 13.500 6 9.500 10 7.500C6 8 3 10.500 1 14ZM10 12.500H21C21 9 19 6.500 15.500 6.500C12.500 6.500 10.500 9 10 12.500Z" fill="#0f7ad6"/></svg>
  <!-- store -->
  <svg style="left:630px;top:9px" width="32" height="32" viewBox="0 0 32 32"><path d="M10.500 9.500V8a6 6.300 0 0 1 12 0V9.500" fill="none" stroke="#fff" stroke-width="1.300"/><path d="M13 9.500V8.800a5.200 5.500 0 0 1 10.400 0V9.500" fill="none" stroke="#e8e8e8" stroke-width="1"/><path d="M1 9H30V28.300Q30 29.800 28.500 29.800H2.500Q1 29.800 1 28.300Z" fill="#fff"/><rect x="9.200" y="13.100" width="5.800" height="5.800" fill="#f25022"/><rect x="16.300" y="13.100" width="5.800" height="5.800" fill="#7fba00"/><rect x="9.200" y="20.300" width="5.800" height="5.800" fill="#00a4ef"/><rect x="16.300" y="20.300" width="5.800" height="5.800" fill="#ffb900"/></svg>
  <!-- mail -->
  <svg style="left:692px;top:11px" width="32" height="26" viewBox="0 0 32 26"><path d="M1 8.500L16 1L31 8.500V25H1Z" fill="#fff"/><path d="M1.800 11.400L30.400 8.800L19.400 15L25.600 20.900Z" fill="#05070d"/></svg>
  <!-- studio -->
  <svg style="left:754px;top:10px" width="32" height="30" viewBox="0 0 32 30">
    <defs><linearGradient id="sg" x1="0" y1="1" x2="1" y2="0.150"><stop offset="0" stop-color="#e01010"/><stop offset=".25" stop-color="#f08010"/><stop offset=".5" stop-color="#e8e020"/><stop offset=".78" stop-color="#30c030"/><stop offset="1" stop-color="#20b060"/></linearGradient>
    <linearGradient id="sg2" x1="0" y1="0" x2="1" y2="0"><stop offset="0" stop-color="#10a090"/><stop offset=".5" stop-color="#2060e0"/><stop offset="1" stop-color="#1020a0"/></linearGradient></defs>
    <rect x="5" y="0.300" width="26" height="29.200" fill="#141414"/>
    <rect x="8" y="3.500" width="18" height="25.500" fill="url(#sg)"/><rect x="8" y="0.800" width="18" height="3.200" fill="url(#sg2)"/>
    <path d="M6.500 1v28M28.500 1v28" stroke="#4a4a4a" stroke-width="1.600" stroke-dasharray="1.300 1.700"/>
    <rect x="1.400" y="4.400" width="23.600" height="8" fill="#1e1e1e" stroke="#b0b0b0" stroke-width=".8"/>
    <text x="13.200" y="11" font-family="Liberation Sans,sans-serif" font-size="7.600" fill="#f0f0f0" text-anchor="middle" textLength="21" lengthAdjust="spacingAndGlyphs">Studio</text>
  </svg>
  <!-- 2B -->
  <div style="left:817px;top:10.400px;width:30px;height:28.600px;background:#000"></div>
  <svg style="left:817px;top:10.400px" width="30" height="28.600" viewBox="0 0 30 28.600" fill="none" stroke="#f7c313" stroke-width="3" stroke-linejoin="miter" stroke-linecap="butt"><path d="M6.250 6.800C7.500 2 14 0.800 16 3.600C18 6.200 12.800 9.100 8.900 12.400L5 18.400L20.500 14.200"/><path d="M18.200 4.200C21.900 2 27 3.900 25.800 7.800C25.100 10.400 22.500 11.800 20.500 12.600C24.500 11.700 28.400 14.300 26.400 18.900C25.100 22.800 19.300 26.200 13.500 26.900M3.200 25.300L22.500 20"/></svg>
  <!-- P -->
  <svg style="left:880px;top:8px" width="28" height="32" viewBox="0 0 28 32">
    <defs><linearGradient id="pg" x1="0" y1="0" x2="1" y2="1"><stop offset="0" stop-color="#fff27a"/><stop offset=".45" stop-color="#f6cf10"/><stop offset="1" stop-color="#b48600"/></linearGradient></defs>
    <text x="1.500" y="28.300" font-family="Liberation Serif,serif" font-weight="bold" font-size="36" fill="#a07800" textLength="21" lengthAdjust="spacingAndGlyphs">P</text>
    <text x="0.500" y="27.500" font-family="Liberation Serif,serif" font-weight="bold" font-size="36" fill="url(#pg)" textLength="20" lengthAdjust="spacingAndGlyphs">P</text>
    <path d="M6.500 22.500L15.500 19L24 20.500L25.500 27L17 30.500L8.500 31Z" fill="#c9d6e6" stroke="#8a96a8" stroke-width=".7"/>
    <path d="M15.500 19L17 30.500" stroke="#7a8698" stroke-width=".8"/><path d="M9 24l6-2M9.500 26l6-2M18 22.500l5 1M18.500 24.500l5 1" stroke="#8fa2bc" stroke-width=".7"/>
  </svg>
  <!-- xampp -->
  <svg style="left:941px;top:10px" width="30" height="30" viewBox="0 0 30 30">
    <defs><linearGradient id="xg" x1="0" y1="0" x2="0" y2="1"><stop offset="0" stop-color="#f9a25e"/><stop offset=".12" stop-color="#f58634"/><stop offset="1" stop-color="#ee7a1e"/></linearGradient></defs>
    <rect x="0.300" y="0.200" width="29.500" height="29.600" rx="3" fill="url(#xg)"/>
    <g fill="#fff"><circle cx="9.300" cy="10.600" r="5.500"/><circle cx="21.200" cy="10.600" r="5.500"/><circle cx="9.300" cy="19" r="5.500"/><circle cx="21.200" cy="19" r="5.500"/><rect x="9" y="7.800" width="12.500" height="14"/><rect x="4.600" y="10.600" width="21.300" height="8.400"/></g>
    <g fill="#f2801f"><circle cx="9.300" cy="10.800" r="1.900"/><circle cx="21" cy="10.800" r="1.900"/><circle cx="9.300" cy="18.700" r="1.900"/><circle cx="21" cy="18.700" r="1.900"/></g>
    <path d="M9.300 10.800V18.700M21 10.800V18.700M9.300 14.700H21" stroke="#f2801f" stroke-width="2.200" fill="none"/>
  </svg>
  <!-- opera -->
  <svg style="left:1003px;top:10px" width="30" height="30" viewBox="0 0 30 30">
    <defs><linearGradient id="og" x1="0" y1="0" x2="0" y2="1"><stop offset="0" stop-color="#a00416"/><stop offset="1" stop-color="#ff4a4f"/></linearGradient></defs>
    <circle cx="14.800" cy="14.700" r="14.400" fill="#f01a2c"/>
    <path d="M14.800 0.300A14.400 14.400 0 0 1 14.800 29.100C19.500 28 22.500 22 22.500 14.700S19.500 1.500 14.800 0.300Z" fill="url(#og)"/>
    <ellipse cx="15.300" cy="14.700" rx="7.300" ry="10.700" fill="#05070d"/>
  </svg>
  <!-- remote desktop -->
  <svg style="left:1064px;top:9px" width="33" height="32" viewBox="0 0 33 32">
    <path d="M11 20L17.500 20.500L18.500 25.500H9.500Z" fill="#b4b8c0"/><ellipse cx="14" cy="26.400" rx="7" ry="3" fill="#d6dade"/>
    <path d="M4.200 1.200L27.900 3.800L25 20.300L1.900 19Z" fill="#c4c9d2"/>
    <path d="M5.800 2.900L26.200 5.100L23.700 18.700L3.700 17.500Z" fill="#0a1cc0"/>
    <path d="M5.800 2.900L15 3.900L10 17.900L3.700 17.500Z" fill="#4468f0" opacity=".75"/>
    <path d="M19 4.300L26.200 5.100L24.500 14Z" fill="#5a7af0" opacity=".55"/>
    <circle cx="23.800" cy="23.700" r="7.300" fill="#d9ddd9" stroke="#a8aea8" stroke-width=".6"/>
    <path d="M20 21.200l2.600 2.600-2.600 2.600M27.800 20.400l-2.600 2.600 2.600 2.600" stroke="#2a9a2a" stroke-width="1.700" fill="none"/>
  </svg>
  <!-- explorer -->
  <svg style="left:1127.500px;top:13px" width="28.500" height="22.600" viewBox="0 0 31 28" preserveAspectRatio="none"><path d="M1 2.500Q1 1 2.500 1H12L14.500 4H28.500Q30 4 30 5.500V8H1Z" fill="#f0b429"/><rect x="3.500" y="2.200" width="6.500" height="1.800" fill="#fff"/><path d="M1 5.500H30V25.500Q30 27 28.500 27H2.500Q1 27 1 25.500Z" fill="#fde08a"/><path d="M6.500 28V17.500Q6.500 15.500 8.500 15.500H23.500Q25.500 15.500 25.500 17.500V28H21.500V20H10.500V28Z" fill="#2fb4ee"/></svg>
  <!-- on-screen keyboard -->
  <svg style="left:1187px;top:9px" width="33" height="32" viewBox="0 0 33 32">
    <path d="M14 21L21 22L22 26.500H12.500Z" fill="#b4b8c0"/><ellipse cx="17.800" cy="27.200" rx="8.200" ry="3" fill="#d6dade"/>
    <path d="M6.900 1.400L30.700 3.800L28.100 22.300L4.900 19Z" fill="#c4c9d2"/>
    <path d="M8.500 3.200L29 5.300L26.800 20.500L6.800 17.500Z" fill="#0a1cc0"/>
    <path d="M8.500 3.200L18 4.200L14 18.500L6.800 17.500Z" fill="#3c5ce8" opacity=".7"/>
    <rect x="2.200" y="5.700" width="23.600" height="10.300" fill="#cfe4f6" stroke="#5f97d6" stroke-width=".9"/>
    <path d="M4 8.200h20M4 10.800h20" stroke="#fff" stroke-width="1.500" stroke-dasharray="1.600 .8"/><path d="M4 13.400h20" stroke="#fff" stroke-width="1.500" stroke-dasharray="2.400 .8 11 .8 2.400 .8 1.600"/>
  </svg>
  <!-- word -->
  <svg style="left:1250px;top:9px" width="31" height="31" viewBox="0 0 31 31">
    <defs><linearGradient id="wg" x1="0" y1="0" x2="1" y2="1"><stop offset="0" stop-color="#2a66cc"/><stop offset="1" stop-color="#8ab8f4"/></linearGradient></defs>
    <path d="M7 1.200L24.500 0.700L28.800 5L27.500 29.500L2.500 26.800Z" fill="#e9eff9" stroke="#a7b6cc" stroke-width=".6"/>
    <path d="M24.500 0.700L24.200 5.200L28.800 5Z" fill="#c6d2e6"/>
    <path d="M1.700 5Q6 2 11.500 1.800Q7.500 14 11 27.700L2.500 26.800Q0.500 16 1.700 5Z" fill="url(#wg)"/>
    <text x="15.800" y="15.300" font-family="Liberation Sans,sans-serif" font-weight="bold" font-style="italic" font-size="10.500" fill="#2c50b4" text-anchor="middle">W</text>
    <path d="M21.500 9.300h5.500M21.500 11.800h5.500M21.500 14.300h5.500" stroke="#3c62c2" stroke-width="1.300"/><path d="M11 18.200h16M11.200 21h15.800M11.500 23.800h15" stroke="#3458b8" stroke-width="1.600"/>
  </svg>
  <!-- WD active -->
  <div style="left:1298px;top:0;width:61px;height:50px;background:#33373b"></div>
  <svg style="left:1312px;top:10px" width="34" height="30" viewBox="0 0 34 30">
    <g transform="translate(16.900 13.100) scale(1.200 1) translate(-16.900 -13.100)"><g fill="#4a8cc4"><rect x="14.400" y="1.700" width="5" height="6" rx=".8" transform="rotate(-67.5 16.900 13.100)"/><rect x="14.400" y="1.700" width="5" height="6" rx=".8" transform="rotate(-22.5 16.900 13.100)"/><rect x="14.400" y="1.700" width="5" height="6" rx=".8" transform="rotate(22.5 16.900 13.100)"/><rect x="14.400" y="1.700" width="5" height="6" rx=".8" transform="rotate(67.5 16.900 13.100)"/></g>
    <circle cx="16.900" cy="13.100" r="7.400" fill="none" stroke="#4a8cc4" stroke-width="3.600"/></g>
    <text x="20.800" y="27.700" transform="skewX(-10)" font-family="Liberation Sans,sans-serif" font-weight="bold" font-style="italic" font-size="17.500" text-anchor="middle" fill="#fcc20e" stroke="#0a0a1c" stroke-width="1.600" paint-order="stroke" textLength="27.500" lengthAdjust="spacingAndGlyphs">WD</text>
  </svg>
  <!-- underlines -->
  <div style="left:807px;top:47px;width:50px;height:3px;background:#86bdea"></div>
  <div style="left:993px;top:47px;width:50px;height:3px;background:#86bdea"></div>
  <div style="left:1117px;top:47px;width:40px;height:3px;background:#86bdea"></div>
  <div style="left:1158px;top:47px;width:9px;height:3px;background:#5b86ab"></div>
  <div style="left:1241px;top:47px;width:50px;height:3px;background:#86bdea"></div>
  <div style="left:1298px;top:47px;width:61px;height:3px;background:#76b9ed"></div>
  <!-- tray -->
  <svg style="left:1632px;top:18px" width="20" height="12" viewBox="0 0 20 12" fill="none" stroke="#fff" stroke-width="1.400"><path d="M2 10.500L10 2.500L18 10.500"/></svg>
  <svg style="left:1661px;top:15px" width="22" height="18" viewBox="0 0 22 18" fill="none" stroke="#fff" stroke-width="1.300"><rect x="4.500" y="6" width="15" height="8.500"/><rect x="6" y="7.500" width="12" height="5.500" fill="#fff" stroke="none"/><path d="M20 8.500v3.500M1.500 1.500v3M4.500 1.500v3M0.500 4.500h5v1.500q0 1.500-2 1.500h-1q-2 0-2-1.500Z"/></svg>
  <svg style="left:1691.500px;top:16px" width="22" height="18" viewBox="0 0 24 20" fill="none" stroke="#fff" stroke-width="1.400"><path d="M1.500 7H5L10 2.500V17.500L5 13H1.500Z"/><path d="M13 7.500Q14.500 10 13 12.500M15.500 5Q18.500 10 15.500 15" /><path d="M18.500 1.500Q23 10 18.500 18.500" stroke="#7a7a7a" stroke-width="1.100"/></svg>
  <span class="t" style="left:1726.500px;top:18.500px;font-size:14.600px;transform:scaleX(.86);transform-origin:0 50%;color:#fff">FRA</span>
  <span class="t" style="left:1758px;width:100px;text-align:center;top:7.700px;font-size:13.900px;color:#fff">05:40</span>
  <span class="t" style="left:1758px;width:100px;text-align:center;top:30px;font-size:14px;letter-spacing:.44px;color:#fff">14/06/2018</span>
  <svg style="left:1868px;top:14px" width="22" height="22" viewBox="0 0 22 22"><path d="M1 1.200H21.200V18.200H13.600L11.100 20.800L8.600 18.200H1Z" fill="#fff"/><path d="M5.200 6h12M5.200 9.500h12M5.200 12.900h7.800" stroke="#05070d" stroke-width="1.100"/></svg>
  <div style="left:1914px;top:0;width:1px;height:50px;background:#4a4a4a"></div>
</div>


</div>
</body>
</html>
